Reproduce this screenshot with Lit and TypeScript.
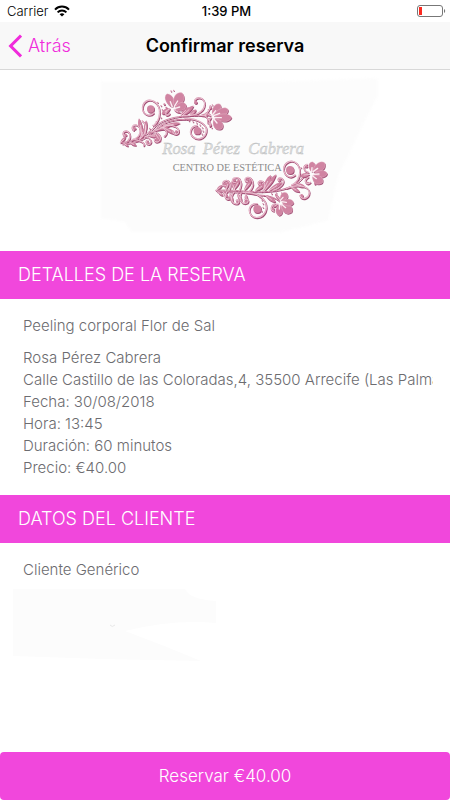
import { LitElement, html, css, svg } from "lit";
import { customElement, property } from "lit/decorators.js";

type Leaf = [number, number, number, number, number];
type Dot = [number, number, number];

interface Branch {
  stems: string[];
  curls: string[];
  leaves: Leaf[];
  petals: Leaf[];
  dots: Dot[];
}

const along = ([x1, y1, x2, y2, w]: Leaf) => {
  const dx = x2 - x1;
  const dy = y2 - y1;
  const len = Math.hypot(dx, dy);
  return (t: number, s: number) =>
    `${Math.round(x1 + dx * t - (dy / len) * w * s)} ${Math.round(y1 + dy * t + (dx / len) * w * s)}`;
};

/* Almond shape from a base point to a tip. */
const leafPath = (l: Leaf) => {
  const at = along(l);
  return `M${at(0, 0)}C${at(0.3, 0.5)} ${at(0.6, 1)} ${at(1, 0)}C${at(0.8, -1)} ${at(0.3, -0.8)} ${at(0, 0)}Z`;
};

/* Fuller shape, widest near the outer end. */
const petalPath = (l: Leaf) => {
  const at = along(l);
  return `M${at(0, 0)}C${at(0.2, 1.2)} ${at(0.8, 1.9)} ${at(1, 0)}C${at(0.9, -1.8)} ${at(0.2, -1.2)} ${at(0, 0)}Z`;
};

const upper: Branch = {
  stems: [
    "M76 203C125 198 152 182 178 156C206 128 262 118 334 122",
    "M82 207C132 204 160 186 184 160C210 136 250 130 284 134",
    "M160 176C176 166 192 164 214 162",
  ],
  curls: [
    "M178 150C196 134 202 96 178 80C160 68 140 82 143 104C146 120 166 126 176 114",
    "M270 130C312 130 338 150 334 170C330 192 306 198 292 184C280 170 290 152 306 152",
    "M262 122C300 124 328 112 329 88C329 68 308 62 299 76",
    "M134 192C150 182 162 152 142 138",
    "M112 194C138 188 144 158 124 150C112 148 108 160 116 166",
    "M98 198C108 190 108 172 94 168C84 168 80 180 90 184",
    "M120 194C142 198 152 206 146 212",
    "M150 184C164 186 176 202 162 208C152 208 150 198 158 196",
    "M170 170C190 170 206 188 190 200C180 204 174 194 182 190",
    "M206 150C236 148 256 158 250 174C242 182 230 176 234 168",
    "M196 156C212 160 222 174 208 184",
    "M224 116C212 128 208 114 216 108",
    "M330 122C340 108 348 98 346 92",
    "M330 122C342 132 350 142 344 154",
  ],
  leaves: [
    [76, 203, 92, 186, 6], [86, 205, 100, 214, 6], [104, 202, 124, 212, 7],
    [136, 190, 146, 160, 8], [142, 182, 132, 130, 9], [150, 178, 154, 136, 8],
    [160, 182, 192, 184, 8], [182, 166, 230, 148, 9], [204, 154, 256, 144, 8],
    [206, 158, 240, 176, 9], [180, 174, 196, 200, 8], [262, 122, 296, 92, 10],
    [256, 122, 282, 96, 7], [284, 122, 304, 104, 7], [314, 122, 346, 118, 7],
    [226, 100, 200, 116, 11], [236, 104, 256, 114, 6], [350, 124, 332, 112, 6],
    [350, 126, 336, 140, 6],
  ],
  petals: [
    [232, 96, 216, 56, 10], [238, 94, 262, 54, 13],
    [240, 100, 274, 90, 10], [352, 120, 376, 88, 10], [356, 122, 400, 104, 10],
    [358, 128, 410, 128, 10], [356, 132, 380, 162, 12],
  ],
  dots: [
    [167, 102, 11], [307, 167, 11], [302, 82, 5], [118, 160, 5], [92, 180, 4],
    [158, 202, 4], [186, 194, 4], [244, 170, 4], [228, 48, 2], [236, 46, 2],
    [268, 106, 3], [262, 112, 2], [208, 88, 3], [214, 98, 3],
    [346, 98, 4], [340, 104, 2], [346, 150, 4], [338, 144, 2],
    [352, 90, 2], [350, 158, 2],
    [188, 82, 2], [198, 92, 2], [202, 104, 2], [198, 128, 2],
    [184, 140, 2], [174, 151, 2], [164, 160, 2], [222, 136, 2], [234, 134, 2],
    [246, 133, 2], [258, 133, 2], [282, 137, 2], [294, 140, 2],
    [305, 144, 2], [315, 150, 2], [322, 158, 2], [324, 168, 2], [321, 177, 2],
  ],
};

const lower: Branch = {
  stems: [
    "M362 346C420 342 456 352 506 350C556 348 602 338 626 304",
    "M366 350C420 350 450 352 494 360C520 362 540 366 552 378",
  ],
  curls: [
    "M590 330C614 320 622 288 606 266C590 250 566 262 566 284C568 304 588 312 600 300",
    "M444 352C488 350 516 372 514 400C510 426 484 436 468 420C456 402 468 384 486 386",
    "M574 340C604 326 642 332 643 352C642 372 620 376 615 362",
    "M402 346C412 328 402 312 388 318C378 326 386 336 392 332",
    "M432 348C446 322 434 302 416 310C408 318 416 326 422 322",
    "M462 350C482 332 474 304 454 308C446 314 452 322 458 320",
    "M500 350C514 334 512 318 494 318C486 322 490 330 496 328",
    "M534 346C558 338 574 320 560 310C550 306 546 316 552 318",
    "M396 350C386 362 390 376 402 372",
    "M416 352C402 372 412 390 428 386C436 380 430 372 424 376",
    "M438 354C430 374 440 390 456 384C464 376 456 368 450 374",
    "M640 306C622 318 636 334 646 322",
    "M540 386C526 392 526 408 536 408",
    "M640 292C622 288 624 272 636 268",
  ],
  leaves: [
    [364, 346, 382, 330, 6], [368, 350, 384, 362, 6], [384, 350, 398, 368, 7],
    [392, 346, 402, 316, 7], [416, 346, 436, 310, 8], [420, 348, 410, 318, 6],
    [446, 348, 472, 312, 8], [478, 350, 514, 324, 9], [504, 348, 528, 300, 10],
    [506, 350, 544, 298, 9], [520, 348, 562, 322, 9], [404, 354, 412, 384, 8],
    [426, 354, 440, 380, 8], [452, 356, 454, 378, 7], [586, 334, 614, 352, 8],
    [600, 326, 630, 336, 8], [510, 360, 542, 382, 9], [644, 298, 616, 302, 10],
    [556, 376, 540, 356, 6], [550, 386, 534, 396, 6],
  ],
  petals: [
    [650, 290, 652, 260, 9], [654, 290, 690, 264, 11], [656, 298, 697, 296, 9],
    [652, 302, 682, 324, 11], [554, 388, 552, 422, 9],
    [560, 388, 590, 412, 12], [560, 380, 596, 384, 9], [556, 376, 576, 354, 9],
  ],
  dots: [
    [585, 285, 12], [487, 402, 12], [620, 362, 5], [390, 326, 4], [418, 316, 4],
    [458, 314, 4], [496, 324, 4], [554, 314, 4], [402, 368, 3], [428, 382, 4],
    [452, 380, 4], [638, 324, 4], [634, 274, 4], [534, 402, 4],
    [618, 278, 2], [660, 326, 3], [560, 354, 2],
    [484, 358, 2], [494, 365, 2], [501, 375, 2], [504, 386, 2], [504, 397, 2],
    [500, 408, 2], [604, 322, 2], [610, 308, 2], [530, 356, 2], [544, 354, 2],
  ],
};

const flora = (b: Branch) => svg`
  <g>
    ${b.stems.map((d) => svg`<path class="stem" d=${d} />`)}
    ${b.curls.map((d) => svg`<path class="curl" d=${d} />`)}
    ${b.leaves.map((l) => svg`<path class="leaf" d=${leafPath(l)} />`)}
    ${b.petals.map((l) => svg`<path class="leaf petal" d=${petalPath(l)} />`)}
    ${b.dots.map(([x, y, r]) => svg`<circle class="leaf" cx=${x} cy=${y} r=${r} />`)}
  </g>`;

/* Pale streak along each leaf, petal and curl. */
const shine = (b: Branch) => svg`
  <g class="shine">
    ${b.leaves.map((l) => svg`<path d=${`M${along(l)(0, 0)}L${along(l)(0.6, 0)}`} />`)}
    ${b.petals.map((l) => svg`<path class="vein" d=${`M${along(l)(0, 0)}L${along(l)(0.4, 0)}`} />`)}
    ${b.curls.map((d) => svg`<path d=${d} />`)}
  </g>`;

@customElement("salon-logo")
export class SalonLogo extends LitElement {
  static styles = css`
    :host { display: block; width: 285px; }
    svg { display: block; width: 100%; height: auto; }
    .haze { fill: #fcfcfc; filter: blur(3px); }
    .dark { color: #a04e74; }
    .pink { color: #d084a2; }
    .stem { fill: none; stroke: currentColor; stroke-width: 3; stroke-linecap: round; }
    .curl { fill: none; stroke: currentColor; stroke-width: 4; stroke-linecap: round; }
    .leaf { fill: currentColor; }
    .pink .petal { stroke: #efcbd8; stroke-width: 1; }
    .shine { fill: none; stroke: #f6dfe8; stroke-width: 2; stroke-linecap: round; }
    .vein { stroke: #fbeef3; stroke-width: 4; }
    .name {
      font: italic 50px "Liberation Serif", serif;
      fill: #dfe1e1;
      stroke: #b4b7b8;
      stroke-width: 1;
    }
    .tagline { font: 31px "Liberation Serif", serif; fill: #8c8c8c; }
  `;

  render() {
    return html`
      <svg viewBox="0 0 855 480" role="img" aria-label="Rosa Pérez Cabrera, centro de estética">
        <path class="haze" d="M18 20H560L848 10V60L730 300L700 436L560 472H110L90 440L18 430Z" />
        <g class="dark" transform="translate(2 3)">${flora(upper)}${flora(lower)}</g>
        <g class="pink">${flora(upper)}${flora(lower)}</g>
        ${shine(upper)}${shine(lower)}
        <text class="name" y="237">
          <tspan x="202">Rosa</tspan>
          <tspan x="323">Pérez</tspan>
          <tspan x="460">Cabrera</tspan>
        </text>
        <text class="tagline" x="233" y="287">CENTRO DE ESTÉTICA</text>
      </svg>
    `;
  }
}

@customElement("detail-section")
export class DetailSection extends LitElement {
  @property() heading = "";

  static styles = css`
    :host { display: block; }
    h2 {
      margin: 0;
      padding: 0 18px;
      background: #f147dc;
      color: #fff;
      font-size: 18px;
      font-weight: 300;
      line-height: 48px;
    }
    .body { padding: 16px 17px 16px 23px; }
  `;

  render() {
    return html`
      <h2>${this.heading}</h2>
      <div class="body"><slot></slot></div>
    `;
  }
}

@customElement("app-root")
export class AppRoot extends LitElement {
  static styles = css`
    :host {
      display: flex;
      flex-direction: column;
      min-height: 100vh;
      background: #fff;
      color: #6c6c70;
      font-family: Inter, "Liberation Sans", sans-serif;
      font-size: 15px;
      font-weight: 300;
      line-height: 22px;
    }
    .status, .nav {
      display: grid;
      grid-template-columns: 1fr auto 1fr;
      align-items: center;
    }
    .status {
      height: 22px;
      padding: 0 4px 0 7px;
      color: #000;
      font-size: 13px;
    }
    .carrier { display: flex; align-items: center; gap: 6px; }
    .time { font-weight: 500; }
    .battery { justify-self: end; }
    .nav {
      height: 47px;
      padding: 0 8px;
      background: #f8f8f8;
      border-bottom: 1px solid #d8d8d8;
    }
    .back {
      display: flex;
      align-items: center;
      gap: 6px;
      justify-self: start;
      color: #f02bdb;
      font-size: 18px;
      text-decoration: none;
    }
    h1 { margin: 0; color: #000; font-size: 18px; font-weight: 600; }
    svg { display: block; }
    .logo { display: flex; justify-content: center; padding: 5px 0 16px 24px; }
    p { margin: 0; overflow: hidden; white-space: nowrap; }
    .service { margin-bottom: 10px; }
    .smudge { width: 203px; margin: 8px 0 0 -10px; }
    .reserve {
      width: 100%;
      height: 48px;
      margin-top: auto;
      border: 0;
      border-radius: 4px;
      background: #f147dc;
      color: #fff;
      font: 300 17px Inter, "Liberation Sans", sans-serif;
    }
  `;

  render() {
    return html`
      <div class="status">
        <span class="carrier">
          Carrier
          <svg width="16" height="12" viewBox="0 0 16 12" aria-hidden="true">
            <g fill="none" stroke="#000" stroke-width="2">
              <path d="M1 4.6C5 .6 11 .6 15 4.6" />
              <path d="M3.6 7.4C6 5 10 5 12.4 7.4" />
            </g>
            <path d="M5.6 9.2C7 8 9 8 10.4 9.2L8 11.6Z" />
          </svg>
        </span>
        <span class="time">1:39 PM</span>
        <svg class="battery" width="29" height="13" viewBox="0 0 29 13" role="img" aria-label="Batería baja">
          <rect x=".5" y=".5" width="25" height="11" rx="2.5" fill="#fff" stroke="#777" />
          <rect x="2" y="2" width="3" height="8" fill="#fb2a20" />
          <path d="M27 4C28.6 4.6 28.6 7.4 27 8Z" fill="#777" />
        </svg>
      </div>
      <nav class="nav">
        <a class="back" href="#">
          <svg width="14" height="24" viewBox="0 0 14 24" aria-hidden="true">
            <path d="M13 1.6L2.6 12L13 22.4" fill="none" stroke="#f02bdb" stroke-width="3" />
          </svg>
          Atrás
        </a>
        <h1>Confirmar reserva</h1>
      </nav>
      <div class="logo"><salon-logo></salon-logo></div>
      <detail-section heading="DETALLES DE LA RESERVA">
        <p class="service">Peeling corporal Flor de Sal</p>
        <p>Rosa Pérez Cabrera</p>
        <p>Calle Castillo de las Coloradas,4, 35500 Arrecife (Las Palmas)</p>
        <p>Fecha: 30/08/2018</p>
        <p>Hora: 13:45</p>
        <p>Duración: 60 minutos</p>
        <p>Precio: €40.00</p>
      </detail-section>
      <detail-section heading="DATOS DEL CLIENTE">
        <p>Cliente Genérico</p>
        <svg class="smudge" viewBox="0 0 203 73" aria-hidden="true">
          <path fill="#fcfcfc" d="M0 0H172Q176 10 203 12V34Q160 30 112 42Q150 56 188 72L90 70L0 67Z" />
          <path fill="none" stroke="#e8e8e8" d="M97 36Q99 39 102 36" />
        </svg>
      </detail-section>
      <button class="reserve" type="button">Reservar €40.00</button>
    `;
  }
}
